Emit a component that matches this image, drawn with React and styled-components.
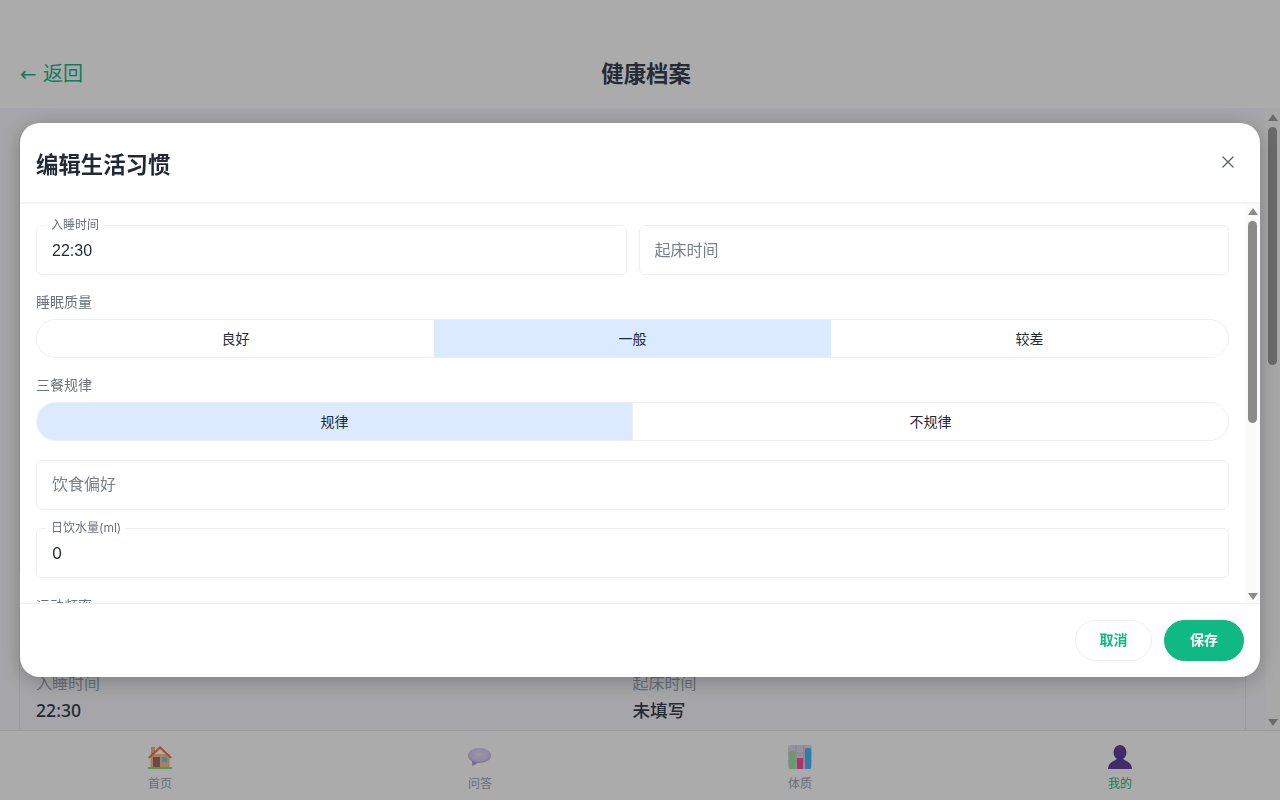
import React from "react";
import styled, { createGlobalStyle } from "styled-components";
import { X } from "lucide-react";

const Global = createGlobalStyle`
  * { box-sizing: border-box; }
  html, body { margin: 0; height: 100%; overflow: hidden; }
  body { font-family: "Noto Sans", "Noto Sans CJK SC", sans-serif; color: #1f2937; background: #fff; }
`;

const Page = styled.div`
  height: 800px;
  display: flex;
  flex-direction: column;
  background: #f8f7fc;
`;
const TopBar = styled.header`
  height: 108px;
  flex: none;
  padding: 36px 20px 0;
  background: #fff;
  display: flex;
  align-items: center;
  justify-content: space-between;
`;
const BackLink = styled.div`
  font: 20px "DejaVu Sans", "Noto Sans CJK SC", sans-serif;
  color: #16b98a;
  white-space: nowrap;
`;
const PageTitle = styled.h1`
  margin: 0;
  font-size: 22.4px;
  font-weight: 700;
  color: #374151;
`;
const TopSpacer = styled.div`
  width: 51px;
`;
const MainRow = styled.div`
  flex: 1;
  min-height: 0;
  display: flex;
`;
const Main = styled.main`
  flex: 1;
  min-width: 0;
  overflow: hidden;
  padding: 20px 19px 0;
`;
const Rail = styled.div`
  width: 15px;
  flex: none;
  background: #fbfbfb;
  display: flex;
  flex-direction: column;
`;
const ArrowBox = styled.div`
  height: ${(p) => p.$h}px;
  flex: none;
  display: flex;
  align-items: center;
  justify-content: center;
  margin-top: ${(p) => (p.$end ? "auto" : "0")};
`;
const Arrow = styled.span`
  width: 0;
  height: 0;
  border-left: 5px solid transparent;
  border-right: 5px solid transparent;
  border-${(p) => (p.$down ? "top" : "bottom")}: 7px solid ${(p) => p.$color};
`;
const Thumb = styled.div`
  width: 9px;
  margin-left: 3px;
  flex: none;
  height: ${(p) => p.$h}px;
  margin-top: ${(p) => p.$top}px;
  border-radius: 5px;
  background: ${(p) => p.$color};
`;
const Card = styled.section`
  background: #f8f7fc;
  border: 1px solid #e5e7eb;
  border-radius: 12px;
  padding: 16px;
  margin-bottom: 20px;
  min-height: ${(p) => p.$min}px;
`;
const CardTitle = styled.h2`
  margin: 0 0 23px;
  font-size: 20px;
  line-height: 32px;
  color: #374151;
`;
const InfoGrid = styled.div`
  display: grid;
  grid-template-columns: 1fr 1fr;
  row-gap: 16px;
`;
const InfoItem = styled.div`
  display: flex;
  flex-direction: column;
  gap: 3px;
`;
const InfoLabel = styled.span`
  font-size: 16px;
  line-height: 22px;
  color: #9ca3af;
`;
const InfoValue = styled.span`
  font-size: 17.6px;
  line-height: 27px;
  font-weight: 500;
  color: #374151;
`;
const BottomNav = styled.nav`
  height: 70px;
  flex: none;
  background: #fff;
  border-top: 1px solid #e5e7eb;
  display: grid;
  grid-template-columns: repeat(4, 1fr);
`;
const NavItem = styled.div`
  display: flex;
  flex-direction: column;
  align-items: center;
  padding-top: 14px;
  gap: 6px;
  color: ${(p) => (p.$active ? "#16b98a" : "#a0a6b2")};
`;
const NavSvg = styled.svg`
  width: 24px;
  height: 24px;
  flex: none;
  display: block;
`;
const NavLabel = styled.span`
  font-size: 12px;
  line-height: 18px;
`;

const Overlay = styled.div`
  position: fixed;
  inset: 0;
  background: rgba(0, 0, 0, 0.33);
`;
const Dialog = styled.div`
  position: fixed;
  left: 20px;
  top: 123px;
  width: 1240px;
  height: 554px;
  background: #fff;
  border-radius: 20px;
  box-shadow: 0 4px 20px rgba(0, 0, 0, 0.25);
  display: flex;
  flex-direction: column;
  overflow: hidden;
`;
const DialogHead = styled.div`
  height: 81px;
  flex: none;
  padding: 2px 16px 0;
  border-bottom: 2px solid #f5f5f6;
  display: flex;
  align-items: center;
  justify-content: space-between;
`;
const DialogTitle = styled.h2`
  margin: 0;
  font-size: 22.4px;
  font-weight: 700;
  color: #1f2937;
`;
const CloseButton = styled.button`
  width: 32px;
  height: 32px;
  border: 0;
  background: none;
  padding: 0;
  margin-bottom: 4px;
  display: flex;
  align-items: center;
  justify-content: center;
  color: #5b6478;
`;
const DialogMiddle = styled.div`
  flex: 1;
  min-height: 0;
  display: flex;
`;
const DialogBody = styled.div`
  flex: 1;
  min-width: 0;
  overflow: hidden;
  padding: 21px 16px 16px;
`;
const FieldRow = styled.div`
  display: grid;
  grid-template-columns: 1fr 1fr;
  gap: 12px;
  margin-bottom: 17px;
`;
const Field = styled.div`
  position: relative;
  margin-top: ${(p) => (p.$lead ? 19 : 0)}px;
  margin-bottom: ${(p) => (p.$flat ? 0 : 18)}px;
`;
const FieldInput = styled.input`
  display: block;
  width: 100%;
  height: 50px;
  padding: ${(p) => (p.$low ? "2px" : "0")} 15px 0;
  border: 1px solid #eeeff1;
  border-radius: 6px;
  font: 16px ${(p) => (p.$num ? "Inter" : '"Liberation Sans"')}, "Noto Sans CJK SC", sans-serif;
  color: #1f2937;
  background: #fff;
  outline: none;
  &::placeholder { color: #7a808c; opacity: 1; }
`;
const FloatLabel = styled.label`
  position: absolute;
  left: 10px;
  top: -7px;
  padding: 0 5px;
  background: #fff;
  font: 12px/14px Inter, "Noto Sans CJK SC", sans-serif;
  color: #6b7280;
`;
const GroupLabel = styled.div`
  font-size: 14px;
  line-height: 20px;
  color: #6b7280;
  margin-bottom: 7px;
`;
const Segments = styled.div`
  display: flex;
  height: 39px;
  border: 1px solid #eeeff1;
  border-radius: 20px;
  overflow: hidden;
  margin-bottom: ${(p) => (p.$last ? 0 : 17)}px;
`;
const Segment = styled.div`
  flex: 1;
  display: flex;
  align-items: center;
  justify-content: center;
  padding-bottom: 2px;
  font-size: 14px;
  font-weight: 400;
  color: #1f2937;
  background: ${(p) => (p.$on ? "#dbeafe" : "#fff")};
  margin: ${(p) => (p.$on ? "-1px 0" : 0)};
  border-left: ${(p) => (p.$split ? "1px solid #eeeff1" : "0")};
`;
const DialogFoot = styled.div`
  height: 74px;
  flex: none;
  padding: 0 16px;
  border-top: 1px solid #f0f0f2;
  display: flex;
  align-items: center;
  justify-content: flex-end;
  gap: 12px;
`;
const FootButton = styled.button`
  height: 41px;
  width: ${(p) => (p.$primary ? 80 : 77)}px;
  border-radius: 21px;
  border: 1px solid ${(p) => (p.$primary ? "#10b981" : "#eeeff1")};
  background: ${(p) => (p.$primary ? "#10b981" : "#fff")};
  color: ${(p) => (p.$primary ? "#fff" : "#10b981")};
  font: 600 14px "Noto Sans CJK SC", sans-serif;
  padding: 0 0 3px;
`;

const HomeIcon = () => (
  <NavSvg viewBox="0 0 24 24">
    <rect x="3" y="2" width="4" height="9" fill="#efb386" />
    <rect x="2.5" y="9" width="19" height="13" fill="#fcbf8e" />
    <path d="M0 12.5 12 1l12 11.5-1.6 1L12 3.8 1.6 13.5z" fill="#fb6f45" />
    <rect x="5" y="12" width="7" height="10" fill="#a06e6e" />
    <rect x="14" y="12" width="5" height="5" fill="#57d0fa" />
    <rect x="0" y="22" width="24" height="2" fill="#7fe07f" />
  </NavSvg>
);
const ChatIcon = () => (
  <NavSvg viewBox="0 0 24 24">
    <defs>
      <radialGradient id="bubble" cx="50%" cy="45%" r="60%">
        <stop offset="0%" stopColor="#ebe4f8" />
        <stop offset="70%" stopColor="#d4cdee" />
        <stop offset="100%" stopColor="#a8a0dc" />
      </radialGradient>
    </defs>
    <path d="M3.5 14 4.5 21 10.5 17.5z" fill="#a8a0dc" />
    <ellipse cx="11.5" cy="10.5" rx="11.5" ry="7.5" fill="url(#bubble)" />
  </NavSvg>
);
const ChartIcon = () => (
  <NavSvg viewBox="0 0 24 24">
    <rect width="24" height="24" rx="3" fill="#e0d9ee" />
    <path d="M8 0v24M16 0v24M0 8h24M0 16h24" stroke="#c2bbd0" strokeWidth="0.8" />
    <rect x="1" y="6" width="6" height="18" rx="1.5" fill="#9be89b" />
    <rect x="9" y="13" width="6" height="11" rx="1" fill="#ff4f9e" />
    <rect x="17" y="3" width="6" height="21" rx="1.5" fill="#4cb8ff" />
  </NavSvg>
);
const PersonIcon = () => (
  <NavSvg viewBox="0 0 24 24">
    <ellipse cx="12" cy="7.5" rx="6.5" ry="7.5" fill="#60429e" />
    <path d="M0 24C0 18 5 16.5 9 14h6c4 2.5 9 4 9 10z" fill="#60429e" />
  </NavSvg>
);

const nav = [
  [HomeIcon, "首页"],
  [ChatIcon, "问答"],
  [ChartIcon, "体质"],
  [PersonIcon, "我的", true],
];
const habit = [
  ["入睡时间", "22:30"], ["起床时间", "未填写"],
  ["睡眠质量", "一般"], ["三餐规律", "规律"],
  ["饮食偏好", "未填写"], ["日饮水量", "0 ml"],
  ["运动频率", "未填写"], ["运动类型", "未填写"],
];

export default function App() {
  return (
    <>
      <Global />
      <Page>
        <TopBar>
          <BackLink>← 返回</BackLink>
          <PageTitle>健康档案</PageTitle>
          <TopSpacer />
        </TopBar>
        <MainRow>
          <Main>
            <Card $min={452}>
              <CardTitle>基本信息</CardTitle>
            </Card>
            <Card $min={400}>
              <CardTitle>生活习惯</CardTitle>
              <InfoGrid>
                {habit.map(([l, v]) => (
                  <InfoItem key={l}>
                    <InfoLabel>{l}</InfoLabel>
                    <InfoValue>{v}</InfoValue>
                  </InfoItem>
                ))}
              </InfoGrid>
            </Card>
          </Main>
          <Rail>
            <ArrowBox $h={18}><Arrow $color="#9e9e9e" /></ArrowBox>
            <Thumb $h={238} $top={1} $color="#9e9e9e" />
            <ArrowBox $h={16} $end><Arrow $down $color="#9e9e9e" /></ArrowBox>
          </Rail>
        </MainRow>
        <BottomNav>
          {nav.map(([Icon, l, a]) => (
            <NavItem key={l} $active={a}>
              <Icon />
              <NavLabel>{l}</NavLabel>
            </NavItem>
          ))}
        </BottomNav>
      </Page>
      <Overlay />
      <Dialog>
        <DialogHead>
          <DialogTitle>编辑生活习惯</DialogTitle>
          <CloseButton aria-label="关闭"><X size={20} strokeWidth={1.6} /></CloseButton>
        </DialogHead>
        <DialogMiddle>
          <DialogBody>
            <FieldRow>
              <Field $flat>
                <FloatLabel>入睡时间</FloatLabel>
                <FieldInput $low readOnly value="22:30" />
              </Field>
              <Field $flat>
                <FieldInput $low readOnly placeholder="起床时间" />
              </Field>
            </FieldRow>
            <GroupLabel>睡眠质量</GroupLabel>
            <Segments>
              <Segment>良好</Segment>
              <Segment $on>一般</Segment>
              <Segment>较差</Segment>
            </Segments>
            <GroupLabel>三餐规律</GroupLabel>
            <Segments $last>
              <Segment $on>规律</Segment>
              <Segment $split>不规律</Segment>
            </Segments>
            <Field $lead>
              <FieldInput readOnly placeholder="饮食偏好" />
            </Field>
            <Field>
              <FloatLabel>日饮水量(ml)</FloatLabel>
              <FieldInput $num readOnly value="0" />
            </Field>
            <GroupLabel>运动频率</GroupLabel>
          </DialogBody>
          <Rail>
            <ArrowBox $h={14}><Arrow $color="#8b8b8b" /></ArrowBox>
            <Thumb $h={202} $top={3} $color="#8b8b8b" />
            <ArrowBox $h={14} $end><Arrow $down $color="#8b8b8b" /></ArrowBox>
          </Rail>
        </DialogMiddle>
        <DialogFoot>
          <FootButton>取消</FootButton>
          <FootButton $primary>保存</FootButton>
        </DialogFoot>
      </Dialog>
    </>
  );
}
